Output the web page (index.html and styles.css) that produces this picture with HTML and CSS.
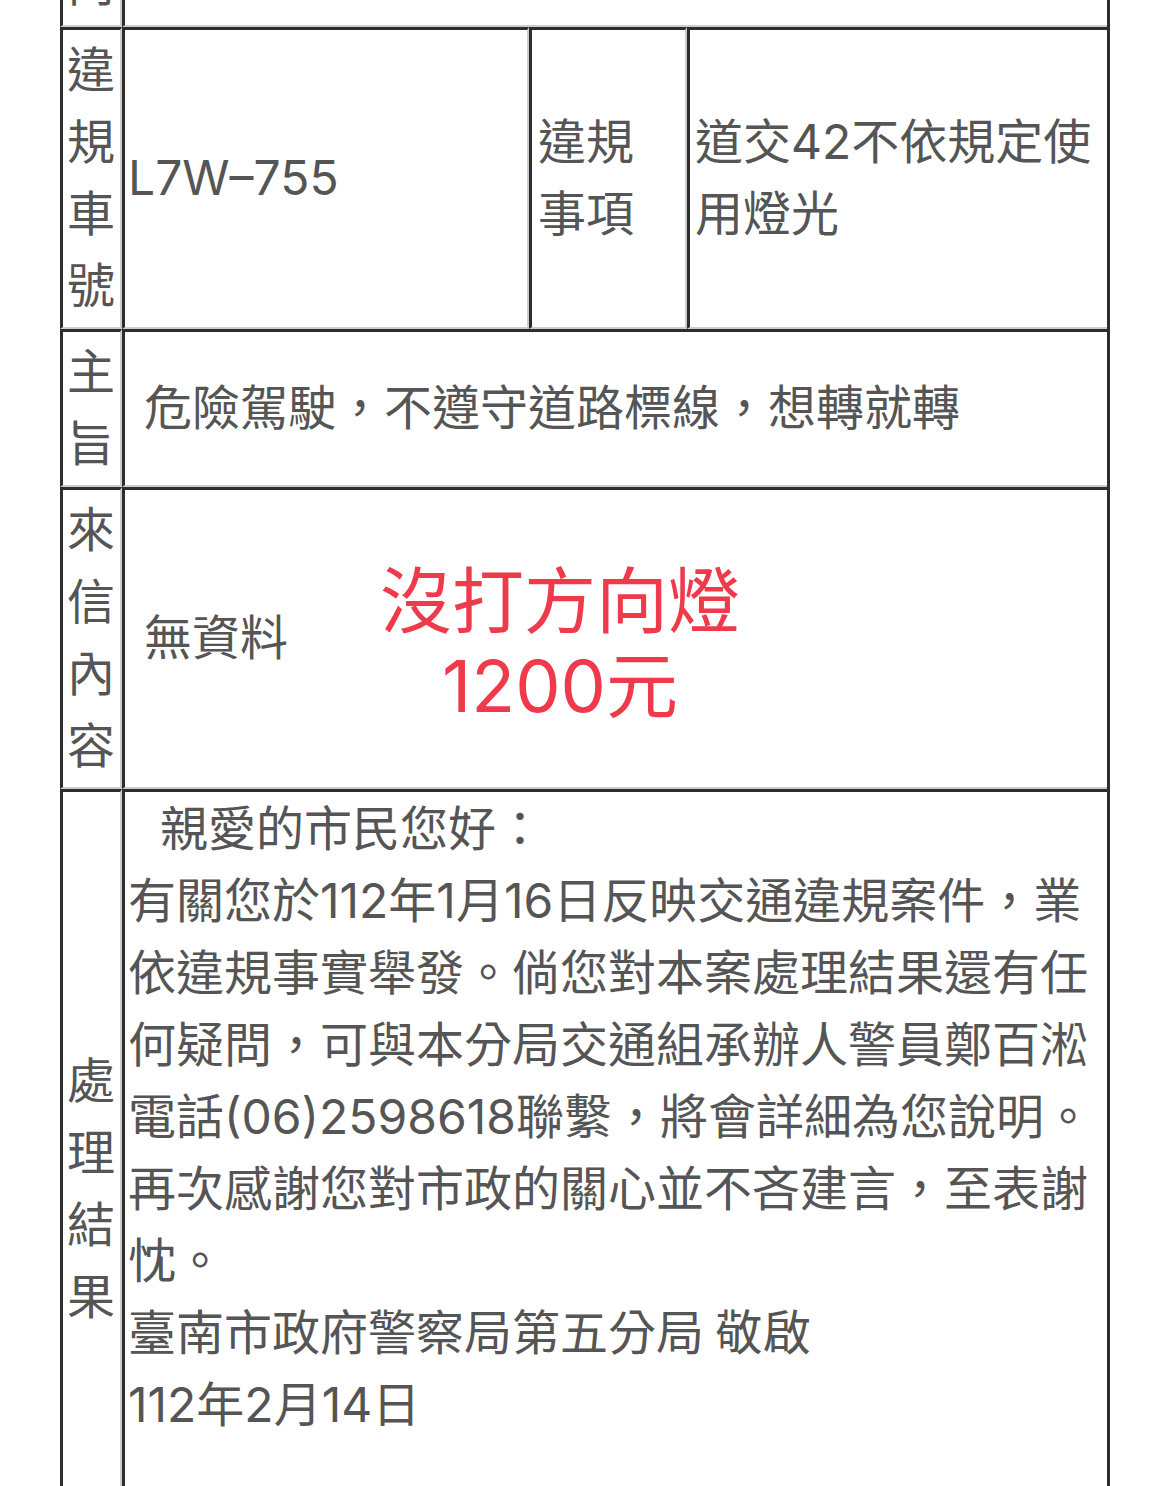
FILE: index.html
```html
<!DOCTYPE html>
<html lang="zh-Hant">
<head>
<meta charset="utf-8">
<title>交通違規檢舉處理結果</title>
<link rel="stylesheet" href="styles.css">
</head>
<body>
<table class="record">
  <colgroup>
    <col class="col-label">
    <col class="col-plate">
    <col class="col-sub">
    <col class="col-item">
  </colgroup>
  <tr>
    <td class="label">內</td>
    <td colspan="3" class="last"></td>
  </tr>
  <tr>
    <td class="label">違<br>規<br>車<br>號</td>
    <td class="plate"><span class="lat">L7W–755</span></td>
    <td class="sub">違規<br>事項</td>
    <td class="item last">道交<span class="lat">42</span>不依規定使<br>用燈光</td>
  </tr>
  <tr>
    <td class="label">主<br>旨</td>
    <td colspan="3" class="inset last">危險駕駛，不遵守道路標線，想轉就轉</td>
  </tr>
  <tr>
    <td class="label">來<br>信<br>內<br>容</td>
    <td colspan="3" class="inset letter-cell last">
      <div class="letter">
        <span class="none">無資料</span>
        <div class="note">沒打方向燈<br><span class="lat">1200</span>元</div>
      </div>
    </td>
  </tr>
  <tr>
    <td class="label">處<br>理<br>結<br>果</td>
    <td colspan="3" class="reply last">
      <p class="greet">親愛的市民您好：</p>
      <p>有關您於<span class="lat">112</span>年<span class="lat">1</span>月<span class="lat">16</span>日反映交通違規案件，業<br>依違規事實舉發。倘您對本案處理結果還有任<br>何疑問，可與本分局交通組承辦人警員鄭百淞<br>電話<span class="lat">(06)2598618</span>聯繫，將會詳細為您說明。<br>再次感謝您對市政的關心並不吝建言，至表謝<br>忱。<br>臺南市政府警察局第五分局 敬啟<br><span class="lat">112</span>年<span class="lat">2</span>月<span class="lat">14</span>日</p>
    </td>
  </tr>
</table>
</body>
</html>
```
FILE: styles.css
```css
html, body {
  margin: 0;
  padding: 0;
  background: #ffffff;
}

body {
  font-family: "Noto Sans CJK TC", sans-serif;
  color: #555555;
  overflow: hidden;
}

.record {
  border-collapse: separate;
  border-spacing: 0;
  table-layout: fixed;
  width: 1050px;
  margin: -59px 0 0 60px;
  border-right: 3px solid #2d2d2d;
  font-size: 48px;
  line-height: 72px;
}

.col-label { width: 62px; }
.col-plate { width: 407px; }
.col-sub { width: 158px; }
.col-item { width: 420px; }

.record td {
  border-top: 3px solid #2d2d2d;
  border-left: 3px solid #2d2d2d;
  border-right: 2px solid #cdcdcd;
  border-bottom: 2px solid #cdcdcd;
  padding: 0 4px 9px 4px;
  vertical-align: middle;
  font-weight: 400;
}

.record td.last {
  border-right: 0;
}

.lat {
  font-family: Inter, "Noto Sans CJK TC", sans-serif;
  line-height: 1;
}

.record td.plate {
  padding-left: 3px;
}

.record td.sub {
  padding-left: 6px;
}

.record td.item {
  padding-left: 5px;
}

.record td.inset {
  padding-left: 19px;
}

.record td.letter-cell {
  padding-bottom: 10px;
}

.letter {
  display: flex;
  align-items: center;
}

.none {
  flex: none;
}

.note {
  margin: 8px 0 0 92px;
  width: 360px;
  text-align: center;
  color: #ee3a4b;
  font-size: 72px;
  line-height: 85px;
}

.record td.reply {
  vertical-align: top;
  padding: 0 0 150px 3px;
}

.reply p {
  margin: 0;
}

.reply .greet {
  margin-top: -3px;
  text-indent: 32px;
}
```
